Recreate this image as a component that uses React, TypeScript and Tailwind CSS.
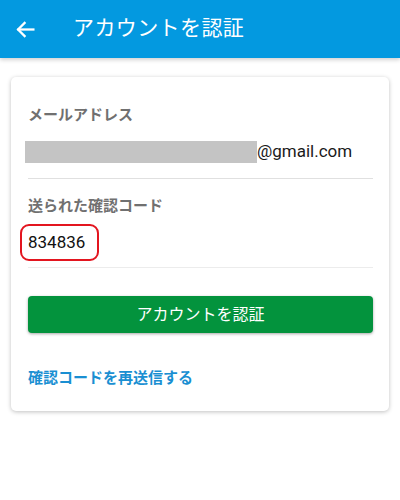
import React from "react";

const font = { fontFamily: "Roboto, 'Noto Sans CJK JP', sans-serif" };

export default function App() {
  return (
    <div className="min-h-[500px] w-[400px] bg-white" style={font}>
      {/* Top bar */}
      <div className="h-[58px] bg-[#0399e0] flex items-center shadow-[0_2px_4px_rgba(0,0,0,0.18)] relative z-10">
        <svg className="ml-[15px] w-[21px] h-[21px]" viewBox="0 0 24 24" fill="none" stroke="white" strokeWidth="2.6" strokeLinecap="square">
          <path d="M21 12H4" />
          <path d="M11 4.5L3.5 12L11 19.5" />
        </svg>
        <span className="ml-[37px] text-[21px] text-white tracking-[0.4px]">アカウントを認証</span>
      </div>

      {/* Card */}
      <div className="mx-[11px] mt-[19px] rounded-[5px] bg-white shadow-[0_1px_4px_rgba(0,0,0,0.25)] pl-[17px] pr-[16px] pt-[27px] pb-[23px]">
        <div className="h-[22px] flex items-center text-[15px] font-bold text-[#707070]">メールアドレス</div>
        <div className="mt-[15px] h-[22px] flex items-center -ml-[3px]">
          <div className="w-[232px] h-[22px] bg-[#c4c4c4]" />
          <span className="text-[17px] text-[#1a1a1a]">@gmail.com</span>
        </div>
        <div className="mt-[15px] h-px bg-[#e0e0e0]" />

        <div className="mt-[16px] h-[22px] flex items-center text-[15px] font-bold text-[#707070]">送られた確認コード</div>
        <div className="mt-[7px] -ml-[8px] w-[79px] h-[37px] border-2 border-[#e3151f] rounded-[9px] flex items-center pl-[6px]">
          <span className="text-[17px] text-[#111]">834836</span>
        </div>
        <div className="mt-[6px] h-px bg-[#ececec]" />

        <button className="mt-[28px] w-full h-[37px] rounded-[4px] bg-[#03933d] text-white text-[16px] shadow-[0_1px_3px_rgba(0,0,0,0.35)] flex items-center justify-center">
          アカウントを認証
        </button>

        <div className="mt-[35px] h-[20px] flex items-center text-[15px] font-bold text-[#1a8fd2]">確認コードを再送信する</div>
      </div>
    </div>
  );
}
